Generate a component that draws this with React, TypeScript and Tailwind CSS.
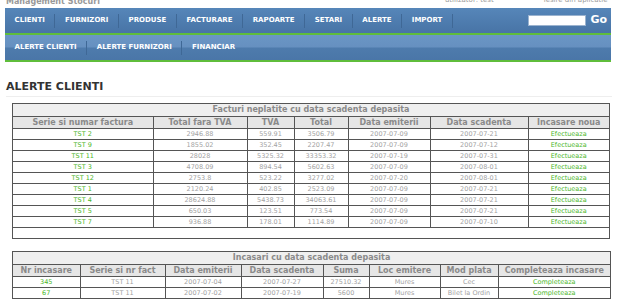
const menu = ["CLIENTI", "FURNIZORI", "PRODUSE", "FACTURARE", "RAPOARTE", "SETARI", "ALERTE", "IMPORT"];
const submenu = ["ALERTE CLIENTI", "ALERTE FURNIZORI", "FINANCIAR"];

const facturi = [
  ["TST 2", "2946.88", "559.91", "3506.79", "2007-07-09", "2007-07-21"],
  ["TST 9", "1855.02", "352.45", "2207.47", "2007-07-09", "2007-07-12"],
  ["TST 11", "28028", "5325.32", "33353.32", "2007-07-19", "2007-07-31"],
  ["TST 3", "4708.09", "894.54", "5602.63", "2007-07-09", "2007-08-01"],
  ["TST 12", "2753.8", "523.22", "3277.02", "2007-07-20", "2007-08-01"],
  ["TST 1", "2120.24", "402.85", "2523.09", "2007-07-09", "2007-07-21"],
  ["TST 4", "28624.88", "5438.73", "34063.61", "2007-07-09", "2007-07-21"],
  ["TST 5", "650.03", "123.51", "773.54", "2007-07-09", "2007-07-21"],
  ["TST 7", "936.88", "178.01", "1114.89", "2007-07-09", "2007-07-10"],
];

const incasari = [
  ["345", "TST 11", "2007-07-04", "2007-07-27", "27510.32", "Mures", "Cec"],
  ["67", "TST 11", "2007-07-02", "2007-07-19", "5600", "Mures", "Bilet la Ordin"],
];

const th = "border border-[#555] bg-[#e6e6e6] h-[12px] p-0 text-[8px] font-bold text-[#8a8a8a] leading-[11px] text-center whitespace-nowrap overflow-hidden";
const td = "border border-[#555] h-[11px] p-0 text-[6.5px] leading-[10px] text-[#a3a3a3] text-center whitespace-nowrap";
const navItem = "px-[9.6px] h-[14px] flex items-center border-r border-r-[#3f6896] text-[7px] font-bold text-white last:border-r-0";

export default function App() {
  return (
    <div className="w-[623px] h-[301px] overflow-hidden bg-white font-['DejaVu_Sans',Verdana,sans-serif]">
      <div className="h-[8px] overflow-hidden flex text-[8px] text-[#999] leading-[9px]">
        <span className="ml-[6px] -mt-[3px] font-bold">Management Stocuri</span>
        <span className="ml-[345px] -mt-[4px] text-[7px]">utilizator: test</span>
        <span className="ml-[50px] -mt-[4px] text-[7px]">iesire din aplicatie</span>
      </div>

      <div className="ml-[5px] w-[606px]">
        <div className="h-[25px] flex items-center bg-gradient-to-b from-[#5686b9] to-[#4874a6]">
          {menu.map((m) => (
            <div key={m} className={navItem}>
              {m}
            </div>
          ))}
          <div className="ml-auto flex items-center gap-[4px] pr-[4px]">
            <div className="w-[58px] h-[11px] bg-white border border-[#9bb3cf]" />
            <span className="text-[11px] font-bold text-white">Go</span>
          </div>
        </div>
        <div className="h-[2px] bg-[#5fbd3b]" />
        <div className="h-[25px] flex items-center bg-[linear-gradient(#6b96c5_0%,#6690c0_48%,#4e7bac_52%,#4a76a8_100%)]">
          {submenu.map((m) => (
            <div key={m} className={navItem}>
              {m}
            </div>
          ))}
        </div>
        <div className="h-[2px] bg-[#5fbd3b]" />
      </div>

      <div className="mt-[18px] ml-[6px] w-[606px] pb-[3px] border-b border-b-[#eeeeee]">
        <h1 className="text-[11px] leading-[13px] font-bold text-[#333]">ALERTE CLIENTI</h1>
      </div>

      <div className="mt-[6px] ml-[12px] w-[598px] border border-[#555]">
        <table className="w-full border-collapse table-fixed">
          <colgroup>
            <col className="w-[140px]" />
            <col className="w-[94px]" />
            <col className="w-[47px]" />
            <col className="w-[54px]" />
            <col className="w-[82px]" />
            <col className="w-[98px]" />
            <col />
          </colgroup>
          <thead>
            <tr>
              <th colSpan={7} className={th + " bg-[#efefef] border-t-0 border-x-0"}>
                Facturi neplatite cu data scadenta depasita
              </th>
            </tr>
            <tr>
              {["Serie si numar factura", "Total fara TVA", "TVA", "Total", "Data emiterii", "Data scadenta", "Incasare noua"].map((h) => (
                <th key={h} className={th + " first:border-l-0 last:border-r-0"}>{h}</th>
              ))}
            </tr>
          </thead>
          <tbody>
            {facturi.map((r) => (
              <tr key={r[0]}>
                <td className={td + " border-l-0"}>
                  <span className="text-[#4cb82c]">{r[0]}</span>
                </td>
                {r.slice(1).map((c, i) => (
                  <td key={i} className={td}>{c}</td>
                ))}
                <td className={td + " border-r-0"}>
                  <span className="text-[#4cb82c]">Efectueaza</span>
                </td>
              </tr>
            ))}
            <tr>
              <td colSpan={7} className="h-[11px] p-0" />
            </tr>
          </tbody>
        </table>
      </div>

      <div className="mt-[12px] ml-[12px] w-[599px] border border-[#555]">
        <table className="w-full border-collapse table-fixed">
          <colgroup>
            <col className="w-[67px]" />
            <col className="w-[85px]" />
            <col className="w-[76px]" />
            <col className="w-[82px]" />
            <col className="w-[46px]" />
            <col className="w-[71px]" />
            <col className="w-[58px]" />
            <col />
          </colgroup>
          <thead>
            <tr>
              <th colSpan={8} className={th + " bg-[#efefef] border-t-0 border-x-0"}>
                Incasari cu data scadenta depasita
              </th>
            </tr>
            <tr>
              {["Nr incasare", "Serie si nr fact", "Data emiterii", "Data scadenta", "Suma", "Loc emitere", "Mod plata", "Completeaza incasare"].map((h) => (
                <th key={h} className={th + " first:border-l-0 last:border-r-0"}>{h}</th>
              ))}
            </tr>
          </thead>
          <tbody>
            {incasari.map((r) => (
              <tr key={r[0]} className="last:[&>td]:border-b-0">
                <td className={td + " border-l-0"}>
                  <span className="text-[#4cb82c]">{r[0]}</span>
                </td>
                {r.slice(1).map((c, i) => (
                  <td key={i} className={td}>{c}</td>
                ))}
                <td className={td + " border-r-0"}>
                  <span className="text-[#4cb82c]">Completeaza</span>
                </td>
              </tr>
            ))}
          </tbody>
        </table>
      </div>
    </div>
  );
}
